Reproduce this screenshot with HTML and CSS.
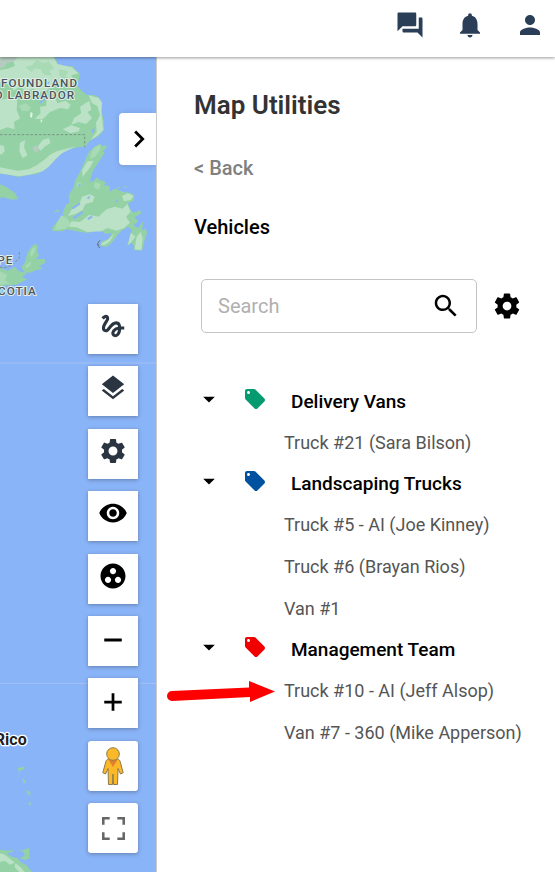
FILE: index.html
```
<!DOCTYPE html>
<html lang="en">
  <head>
    <meta charset="UTF-8" />
    <meta name="viewport" content="width=device-width, initial-scale=1" />
    <title>Map Utilities</title>
    <link rel="stylesheet" href="styles.css">
  </head>
  <body>
    <header class="topbar">
      <button class="icon-btn" type="button" aria-label="Messages">
        <svg class="icon" viewBox="0 0 24 24"><path d="M21 6h-2v9H6v2c0 .55.45 1 1 1h11l4 4V7c0-.55-.45-1-1-1zm-4 6V3c0-.55-.45-1-1-1H3c-.55 0-1 .45-1 1v14l4-4h10c.55 0 1-.45 1-1z"/></svg>
      </button>
      <button class="icon-btn" type="button" aria-label="Notifications">
        <svg class="icon" viewBox="0 0 24 24"><path d="M12 22c1.1 0 2-.9 2-2h-4c0 1.1.89 2 2 2zm6-6v-5c0-3.07-1.64-5.64-4.5-6.32V4c0-.83-.67-1.5-1.5-1.5s-1.5.67-1.5 1.5v.68C7.63 5.36 6 7.92 6 11v5l-2 2v1h16v-1l-2-2z"/></svg>
      </button>
      <button class="icon-btn" type="button" aria-label="Account">
        <svg class="icon" viewBox="0 0 24 24"><path d="M12 12c2.21 0 4-1.79 4-4s-1.79-4-4-4-4 1.79-4 4 1.79 4 4 4zm0 2c-2.67 0-8 1.34-8 4v2h16v-2c0-2.66-5.33-4-8-4z"/></svg>
      </button>
    </header>

    <main class="content">
      <section class="map" aria-label="Map">
        <svg class="map-canvas" viewBox="0 21 468 2445" preserveAspectRatio="xMinYMin slice">
          <!-- Labrador -->
          <path class="land" d="M0 21H165L172 40L195 50L218 48L228 62L240 70L236 90L232 108L246 124L262 136L280 134L296 142L306 156L304 180L311 212L312 240L296 258L270 272L255 290L232 292L205 298L186 308L170 322L150 345L130 362L110 372L80 376L55 381L30 375L0 371Z"/>
          <path class="land-light" d="M35 21H160L172 42L215 52L236 70L214 76L224 96L200 90L186 112L160 104L142 120L118 128L100 116L78 124L60 110L40 122L30 90L0 84V60L22 56L45 48Z"/>
          <path class="land-light" d="M0 150L30 144L52 152L50 180L60 205L42 216L44 238L22 232L0 240Z"/>
          <path class="land-light" d="M140 150L165 143L172 160L196 152L212 164L204 178L180 174L150 186L128 208L104 206L122 190L120 170L138 168Z"/>
          <path class="land-light" d="M240 170L268 152L274 180L262 186L276 204L258 222L236 216L214 224L222 204L244 190Z"/>
          <path class="land-light" d="M188 238L214 226L240 234L236 244L212 250Z"/>
          <path class="land-light" d="M60 278L76 270L72 290L82 316L68 324L58 304Z"/>
          <path class="land-light" d="M128 270L146 264L152 278L134 290L122 302L112 292Z"/>
          <path class="land-light" d="M0 285L12 288L14 304L4 314L0 312Z"/>
          <path class="land-light" d="M0 352L22 356L52 362L86 358L110 346L132 330L150 314L170 304L200 296L228 290L205 300L186 310L168 326L146 350L128 364L84 375L55 379L0 370Z"/>
          <path class="land-light" d="M266 136L296 144L306 158L304 185L310 240L294 256L272 270L290 246L288 218L300 196L292 168L276 160Z"/>
          <path class="land-mid" d="M110 30L132 40L146 34L162 54L148 62L156 76L132 74L122 58L104 56L94 66L76 50L96 46Z"/>
          <path class="land-mid" d="M178 58L206 64L196 78L212 88L190 86L178 76Z"/>
          <path class="land-mid" d="M56 168L78 160L92 172L86 184L66 182Z"/>
          <path class="rock" d="M0 21H54L42 34L20 40L12 52L0 54Z"/>
          <path class="rock" d="M96 294L108 286L118 298L108 310Z"/>
          <path class="water" d="M118 156L134 144L136 148L120 162ZM158 134L170 128L164 140ZM212 96L222 104L216 108ZM280 232L284 240L278 252L275 244ZM140 98L150 94L144 104Z"/>
          <path class="snow" d="M92 186L98 190L96 204L90 200ZM122 208L128 212L122 218Z"/>
          <path class="border-line" d="M0 254H254V292"/>

          <!-- Newfoundland -->
          <path class="land" d="M284 290L300 281L306 288L320 286L318 296L308 302L314 308L296 336L284 354L276 370L270 396L282 392L290 382L300 390L318 396L312 406L330 408L328 426L344 416L356 420L370 426L390 428L403 436L400 452L384 460L392 480L400 488L420 481L424 490L404 502L414 514L400 526L414 534L430 514L426 540L437 536L441 548L434 570L426 602L402 600V586L392 576L380 590L390 560L396 540L384 530L364 542L352 556L340 572L322 590L300 588L306 574L326 566L336 548L318 552L298 540L262 549L238 545L200 538L186 544L158 543L156 534L170 516L190 498L188 488L198 464L208 458L206 436L220 414L226 390L240 366L258 324L268 304Z"/>
          <path class="land-light" d="M262 334L280 332L272 350L256 370L248 380L246 362ZM246 440L270 432L284 440L278 456L256 462L248 480L226 492L204 498L214 480L238 462ZM320 478L344 470L368 476L382 462L392 486L378 500L390 518L372 534L350 542L322 534L304 544L262 546L230 532L206 530L214 514L240 516L268 494L296 500L308 488ZM366 438L384 430L400 438L392 450L372 454ZM344 550L330 574L312 586L302 582L326 568ZM392 548L406 560L392 578L384 586ZM410 560L422 546L428 564L424 600L404 598Z"/>
          <path class="land-mid" d="M284 292L302 284L300 300L284 322L270 326L274 308ZM184 496L200 504L212 522L198 536L164 540L170 520ZM284 396L302 402L296 420L282 412ZM232 396L244 400L240 412L230 412Z"/>
          <path class="water" d="M214 474L238 458L242 462L220 478ZM218 502L246 484L250 488L224 508ZM262 504L278 496L276 504L264 510ZM260 444L272 436L266 448ZM234 404L242 402L238 414ZM346 458L350 446L354 454Z"/>
          <path class="land" d="M162 486L172 478L178 486ZM350 414L356 410L358 416ZM372 410L380 408L378 416Z"/>
          <path class="coast-mark" d="M300 571L293 580L294 586L299 594M292 584H297"/>

          <!-- Gulf and Cape Breton -->
          <path class="land" d="M0 403L20 412L46 430L54 447L36 449L10 442L0 443Z"/>
          <path class="land" d="M107 580L114 590L110 606L118 616L106 628L134 626L136 638L118 648L128 656L110 660L90 668L72 666L64 650L74 638L82 610L94 590Z"/>
          <path class="land-mid" d="M98 594L106 592L104 606L94 622L90 612ZM78 646L94 634L90 648L76 656Z"/>
          <path class="land" d="M0 654L24 662L44 650L56 664L82 668L66 682L82 688L62 698L48 704L30 706L0 708Z"/>
          <path class="land-mid" d="M0 664L22 676L14 690L30 700L0 704Z"/>
          <path class="border-line" d="M0 652H24L42 640L58 624V604"/>

          <!-- Graticule -->
          <path class="graticule" d="M0 939H468M0 1900H468"/>

          <!-- Antilles and South America -->
          <path class="land" d="M54 2154L72 2150L75 2156L64 2160L56 2166ZM68 2186L74 2190L78 2200L70 2198ZM78 2220L90 2226L92 2236L82 2232ZM86 2258L92 2256L93 2264L86 2264Z"/>
          <path class="land" d="M0 2400L30 2402L42 2398L36 2406L20 2410L34 2420L52 2424L64 2438L78 2444L96 2466H0ZM60 2402L88 2394V2426L76 2430L58 2424L74 2418L72 2406Z"/>
          <path class="land-light" d="M0 2410L14 2414L30 2426L44 2438L30 2444L14 2432L0 2436ZM46 2440L62 2452L74 2466H58L44 2452Z"/>

          <g class="region-label">
            <text x="234" y="111">WFOUNDLAND</text>
            <text x="225" y="146">D LABRADOR</text>
            <text x="40" y="642">PE</text>
            <text x="110" y="735">COTIA</text>
          </g>
          <text class="country-label" x="80" y="2086">Rico</text>
        </svg>

        <button class="collapse-tab" type="button" aria-label="Collapse panel">
          <svg class="icon" viewBox="0 0 24 24"><path d="M10 6L8.590 7.410 13.170 12l-4.580 4.590L10 18l6-6z"/></svg>
        </button>

        <div class="map-tools">
          <button class="tool" type="button" aria-label="Draw">
            <svg class="icon" viewBox="0 0 24 24"><path d="M4.590 6.890c.7-.71 1.400-1.350 1.710-1.220.5.200 0 1.030-.3 1.520-.25.420-2.860 3.890-2.860 6.310 0 1.280.48 2.340 1.340 2.980.75.560 1.740.73 2.640.46 1.070-.31 1.950-1.400 3.060-2.770 1.210-1.490 2.830-3.440 4.080-3.440 1.630 0 1.650 1.010 1.760 1.790-3.780.64-5.380 3.670-5.380 5.370 0 1.700 1.440 3.090 3.210 3.090 1.630 0 4.290-1.330 4.690-6.100H21v-2.500h-2.470c-.15-1.650-1.090-4.200-4.030-4.200-2.250 0-4.180 1.910-4.940 2.840-.58.730-2.060 2.480-2.290 2.720-.25.300-.68.840-1.110.84-.45 0-.72-.83-.36-1.920.35-1.090 1.400-2.860 1.850-3.520.78-1.140 1.300-1.920 1.300-3.280C8.950 3.690 7.310 3 6.440 3 5.120 3 3.970 4 3.720 4.250c-.36.360-.66.660-.88.930l1.750 1.710zm9.290 11.660c-.31 0-.74-.26-.74-.72 0-.6.73-2.200 2.870-2.760-.3 2.690-1.430 3.480-2.130 3.480z"/></svg>
          </button>
          <button class="tool" type="button" aria-label="Layers">
            <svg class="icon" viewBox="0 0 24 24"><path d="M11.990 18.540l-7.370-5.730L3 14.070l9 7 9-7-1.630-1.270-7.380 5.740zM12 16l7.360-5.730L21 9l-9-7-9 7 1.630 1.270L12 16z"/></svg>
          </button>
          <button class="tool" type="button" aria-label="Map settings">
            <svg class="icon" viewBox="0 0 24 24"><path d="M19.140 12.940c.04-.3.060-.61.060-.94 0-.32-.02-.64-.07-.94l2.030-1.580c.18-.14.230-.41.120-.61l-1.920-3.320c-.12-.22-.37-.29-.59-.22l-2.390.96c-.5-.38-1.030-.7-1.620-.94l-.36-2.540c-.04-.24-.24-.41-.48-.41h-3.840c-.24 0-.43.170-.47.410l-.36 2.540c-.59.240-1.130.57-1.620.94l-2.390-.96c-.22-.08-.47 0-.59.220L2.740 8.870c-.12.210-.08.470.12.610l2.030 1.580c-.05.300-.09.630-.09.940s.02.640.07.940l-2.030 1.580c-.18.140-.23.410-.12.610l1.920 3.320c.12.220.37.290.59.220l2.390-.96c.5.380 1.030.7 1.620.94l.36 2.540c.05.240.24.410.48.410h3.840c.24 0 .44-.17.470-.41l.36-2.540c.59-.24 1.130-.56 1.620-.94l2.390.96c.22.080.47 0 .59-.22l1.920-3.320c.12-.22.070-.47-.12-.61l-2.010-1.580zM12 15.600c-1.980 0-3.600-1.620-3.600-3.600s1.620-3.600 3.600-3.600 3.600 1.620 3.600 3.600-1.620 3.600-3.600 3.600z"/></svg>
          </button>
          <button class="tool tool-black" type="button" aria-label="Visibility">
            <svg class="icon" viewBox="0 0 24 24"><path d="M12 4.500C7 4.500 2.730 7.610 1 12c1.730 4.390 6 7.500 11 7.500s9.270-3.110 11-7.500c-1.730-4.390-6-7.500-11-7.500zM12 17c-2.760 0-5-2.240-5-5s2.240-5 5-5 5 2.240 5 5-2.240 5-5 5zm0-8c-1.660 0-3 1.340-3 3s1.340 3 3 3 3-1.340 3-3-1.340-3-3-3z"/></svg>
          </button>
          <button class="tool tool-black" type="button" aria-label="Cluster vehicles">
            <svg class="icon" viewBox="0 0 24 24"><path d="M12 2C6.480 2 2 6.480 2 12s4.480 10 10 10 10-4.480 10-10S17.520 2 12 2zM8 17.500c-1.380 0-2.500-1.120-2.500-2.500s1.120-2.500 2.500-2.500 2.500 1.120 2.500 2.500-1.120 2.500-2.500 2.500zM9.500 8c0-1.380 1.120-2.500 2.500-2.500s2.500 1.120 2.500 2.500-1.120 2.500-2.500 2.500S9.500 9.380 9.500 8zm6.500 9.500c-1.380 0-2.500-1.120-2.500-2.500s1.120-2.500 2.500-2.500 2.500 1.120 2.500 2.500-1.120 2.500-2.500 2.500z"/></svg>
          </button>
          <button class="tool tool-zoom" type="button" aria-label="Zoom out">
            <svg class="icon" viewBox="0 0 24 24"><path d="M19 13.200H5v-2.400h14z"/></svg>
          </button>
          <button class="tool tool-zoom" type="button" aria-label="Zoom in">
            <svg class="icon" viewBox="0 0 24 24"><path d="M19 13.100h-5.900V19h-2.200v-5.900H5v-2.200h5.900V5h2.200v5.900H19z"/></svg>
          </button>
          <button class="tool tool-google" type="button" aria-label="Street View">
            <svg class="pegman" viewBox="0 0 22 38">
              <path d="M6.500 12h9c1.500.3 2.300 1.200 2.700 2.700l3 11-2.700 1.300-2.500-5.500-.5 16h-4L11 27l-.5 10.500h-4L6 21.500 3.500 27 .8 25.700l3-11c.4-1.500 1.200-2.400 2.700-2.700z"/>
              <path class="pegman-shade" d="M6.300 12.500h9.400L11 20z"/>
              <circle cx="11" cy="7" r="6.300"/>
            </svg>
          </button>
          <button class="tool tool-google tool-gray" type="button" aria-label="Fullscreen">
            <svg class="fullscreen" viewBox="0 0 18 18"><path d="M0 0v6h2V2h4V0H0zm16 0h-4v2h4v4h2V0h-2zm0 16h-4v2h6v-6h-2v4zM2 12H0v6h6v-2H2v-4z"/></svg>
          </button>
        </div>
      </section>

      <aside class="panel">
        <h1>Map Utilities</h1>
        <a class="back" href="#">&lt; Back</a>
        <h2>Vehicles</h2>

        <form class="search-row" role="search">
          <div class="search-box">
            <input type="text" id="search" placeholder="Search" aria-label="Search" />
            <button class="icon-btn" type="submit" aria-label="Submit search">
              <svg class="icon" viewBox="0 0 24 24"><path d="M15.500 14h-.79l-.28-.27C15.410 12.590 16 11.110 16 9.500 16 5.910 13.090 3 9.500 3S3 5.910 3 9.500 5.910 16 9.500 16c1.610 0 3.090-.59 4.230-1.570l.27.280v.79l5 4.990L20.490 19l-4.990-5zm-6 0C7.010 14 5 11.990 5 9.500S7.010 5 9.500 5 14 7.010 14 9.500 11.990 14 9.500 14z"/></svg>
            </button>
          </div>
          <button class="icon-btn" type="button" aria-label="Search settings">
            <svg class="icon" viewBox="0 0 24 24"><path d="M19.430 12.980c.04-.32.070-.64.070-.98s-.03-.66-.07-.98l2.110-1.650c.19-.15.240-.42.120-.64l-2-3.460c-.12-.22-.39-.3-.61-.22l-2.490 1c-.52-.4-1.080-.73-1.690-.98l-.38-2.650C14.460 2.180 14.250 2 14 2h-4c-.25 0-.46.180-.49.420l-.38 2.650c-.61.250-1.170.59-1.690.98l-2.490-1c-.23-.09-.49 0-.61.220l-2 3.460c-.13.220-.07.490.12.640l2.110 1.650c-.04.320-.07.650-.07.980s.03.660.07.980l-2.110 1.650c-.19.150-.24.420-.12.640l2 3.460c.12.220.39.300.61.220l2.490-1c.52.400 1.080.73 1.690.98l.38 2.650c.03.240.24.420.49.420h4c.25 0 .46-.18.490-.42l.38-2.650c.61-.25 1.170-.59 1.690-.98l2.490 1c.23.090.49 0 .61-.22l2-3.460c.12-.22.070-.49-.12-.64l-2.110-1.650zM12 15.500c-1.930 0-3.500-1.570-3.500-3.500s1.570-3.500 3.500-3.500 3.500 1.570 3.500 3.500-1.570 3.500-3.500 3.500z"/></svg>
          </button>
        </form>

        <div class="groups">
          <details class="group" open>
            <summary>
              <svg class="caret" viewBox="0 0 24 24"><path d="M7 10l5 5 5-5z"/></svg>
              <svg class="tag tag-green" viewBox="0 0 24 24"><path d="M21.410 11.580l-9-9C12.050 2.220 11.550 2 11 2H4c-1.100 0-2 .9-2 2v7c0 .55.220 1.050.59 1.420l9 9c.36.360.86.580 1.410.58.550 0 1.050-.22 1.410-.59l7-7c.37-.36.590-.86.590-1.410 0-.55-.23-1.060-.59-1.420zM5.500 7C4.670 7 4 6.330 4 5.500S4.670 4 5.500 4 7 4.670 7 5.500 6.330 7 5.500 7z"/></svg>
              <span class="group-name">Delivery Vans</span>
            </summary>
            <ul>
              <li><a href="#">Truck #21 (Sara Bilson)</a></li>
            </ul>
          </details>
          <details class="group" open>
            <summary>
              <svg class="caret" viewBox="0 0 24 24"><path d="M7 10l5 5 5-5z"/></svg>
              <svg class="tag tag-blue" viewBox="0 0 24 24"><path d="M21.410 11.580l-9-9C12.050 2.220 11.550 2 11 2H4c-1.100 0-2 .9-2 2v7c0 .55.220 1.050.59 1.420l9 9c.36.360.86.580 1.410.58.550 0 1.050-.22 1.410-.59l7-7c.37-.36.590-.86.590-1.410 0-.55-.23-1.060-.59-1.420zM5.500 7C4.670 7 4 6.330 4 5.500S4.670 4 5.500 4 7 4.670 7 5.500 6.330 7 5.500 7z"/></svg>
              <span class="group-name">Landscaping Trucks</span>
            </summary>
            <ul>
              <li><a href="#">Truck #5 - AI (Joe Kinney)</a></li>
              <li><a href="#">Truck #6 (Brayan Rios)</a></li>
              <li><a href="#">Van #1</a></li>
            </ul>
          </details>
          <details class="group" open>
            <summary>
              <svg class="caret" viewBox="0 0 24 24"><path d="M7 10l5 5 5-5z"/></svg>
              <svg class="tag tag-red" viewBox="0 0 24 24"><path d="M21.410 11.580l-9-9C12.050 2.220 11.550 2 11 2H4c-1.100 0-2 .9-2 2v7c0 .55.220 1.050.59 1.420l9 9c.36.360.86.580 1.410.58.550 0 1.050-.22 1.410-.59l7-7c.37-.36.590-.86.590-1.410 0-.55-.23-1.060-.59-1.420zM5.500 7C4.670 7 4 6.330 4 5.500S4.670 4 5.500 4 7 4.670 7 5.500 6.330 7 5.500 7z"/></svg>
              <span class="group-name">Management Team</span>
            </summary>
            <ul>
              <li class="pointed">
                <svg class="pointer" viewBox="0 0 108 22"><path d="M5 10L82 6.500V0L108 10.500L83 21V16L5 20A5 5 0 0 1 5 10Z"/></svg>
                <a href="#">Truck #10 - AI (Jeff Alsop)</a>
              </li>
              <li><a href="#">Van #7 - 360 (Mike Apperson)</a></li>
            </ul>
          </details>
        </div>
      </aside>
    </main>
  </body>
</html>
```

FILE: styles.css
```
* {
  box-sizing: border-box;
}
body {
  margin: 0;
  min-height: 100vh;
  display: flex;
  flex-direction: column;
  font-family: Roboto, "Liberation Sans", sans-serif;
  font-size: 18px;
  color: #000;
  background: #fff;
}
h1,
h2,
ul {
  margin: 0;
  padding: 0;
}
a {
  text-decoration: none;
}
button {
  padding: 0;
  border: none;
  background: none;
  color: inherit;
  cursor: pointer;
}
svg {
  display: block;
}
.icon {
  width: 30px;
  height: 30px;
  fill: currentColor;
}

/* Top bar */
.topbar {
  display: flex;
  justify-content: flex-end;
  gap: 30px;
  padding: 10px 10px 17px;
  color: #2a3f57;
  box-shadow: 0 1px 3px rgba(0, 0, 0, 0.4);
  z-index: 2;
}

.content {
  flex: 1;
  display: grid;
  grid-template-columns: minmax(156px, 28%) minmax(0, 1fr);
}

/* Map */
.map {
  position: relative;
  overflow: hidden;
  background: #8ab4f8;
}
.map-canvas {
  position: absolute;
  width: 100%;
  height: 100%;
}
.land {
  fill: #94d2a5;
}
.land-mid {
  fill: #a8dab5;
}
.land-light {
  fill: #bbe2c6;
}
.rock {
  fill: #b4cbbf;
}
.snow {
  fill: #e2f3e6;
}
.water {
  fill: #8ab4f8;
}
.border-line {
  fill: none;
  stroke: #7d9488;
  stroke-width: 3;
  stroke-dasharray: 8 5;
}
.coast-mark {
  fill: none;
  stroke: #5f6f7d;
  stroke-width: 3;
}
.graticule {
  stroke: #a3c1f5;
  stroke-width: 3;
}
.region-label {
  font-size: 35px;
  font-weight: 500;
  letter-spacing: 3px;
  text-anchor: end;
  fill: #4a5560;
  stroke: #e0f0e6;
  stroke-width: 6px;
  stroke-linejoin: round;
  paint-order: stroke;
}
.country-label {
  font-size: 48px;
  font-weight: 700;
  text-anchor: end;
  fill: #202124;
  stroke: #fff;
  stroke-width: 8px;
  stroke-linejoin: round;
  paint-order: stroke;
}
.collapse-tab {
  position: absolute;
  top: 56px;
  right: 0;
  width: 37px;
  height: 52px;
  display: flex;
  align-items: center;
  justify-content: center;
  padding-left: 2px;
  background: #fff;
  border-radius: 4px 0 0 4px;
  box-shadow: 0 1px 6px rgba(0, 0, 0, 0.15);
}
.collapse-tab .icon {
  width: 34px;
  height: 34px;
}
.map-tools {
  position: absolute;
  top: 247px;
  right: 18px;
  bottom: 19px;
  display: flex;
  flex-direction: column;
  justify-content: space-between;
}
.tool {
  width: 50px;
  height: 50px;
  display: flex;
  align-items: center;
  justify-content: center;
  padding-bottom: 6px;
  color: #2b3441;
  background: #fff;
  box-shadow: 0 1px 4px rgba(0, 0, 0, 0.3);
}
.tool-black {
  color: #000;
}
.tool-zoom {
  padding-bottom: 2px;
  color: #000;
}
.tool-google {
  padding: 0;
  border-radius: 3px;
}
.tool-gray {
  color: #666;
}
.pegman {
  width: 22px;
  height: 38px;
  fill: #fbb829;
  stroke: #8a7a4c;
  stroke-width: 1;
}
.pegman .pegman-shade {
  fill: #e1802f;
  stroke: none;
}
.fullscreen {
  width: 23px;
  height: 23px;
  fill: currentColor;
}

/* Side panel */
.panel {
  padding: 30px 33px 30px 37px;
  border-left: 1px solid #ccc;
}
h1 {
  font-size: 26px;
  font-weight: 600;
  line-height: 36px;
  color: #333;
}
.back {
  display: block;
  margin-top: 32px;
  font-size: 20px;
  font-weight: 500;
  line-height: 26px;
  color: #808080;
}
h2 {
  margin-top: 33px;
  font-size: 20px;
  font-weight: 500;
  line-height: 26px;
}
.search-row {
  display: flex;
  align-items: center;
  gap: 15px;
  margin-top: 39px;
  padding-left: 7px;
}
.search-box {
  flex: 1;
  min-width: 0;
  display: flex;
  align-items: center;
  height: 54px;
  padding: 0 15px 0 16px;
  border: 1px solid #c4c4c4;
  border-radius: 5px;
}
.search-box input {
  flex: 1;
  min-width: 0;
  padding: 0;
  border: none;
  outline: none;
  background: none;
  font-family: inherit;
  font-size: 20px;
}
.search-box input::placeholder {
  color: #b0b0b0;
}

/* Vehicle groups */
.groups {
  margin-top: 46px;
}
summary {
  display: flex;
  align-items: center;
  height: 40px;
  list-style: none;
  cursor: pointer;
}
.group-name {
  padding-top: 4px;
  font-size: 19px;
  font-weight: 500;
}
.caret {
  width: 28px;
  height: 28px;
  margin-left: 1px;
  margin-right: 20px;
}
.tag {
  width: 24px;
  height: 24px;
  margin-right: 24px;
}
.tag-green {
  fill: #059b70;
}
.tag-blue {
  fill: #00519f;
}
.tag-red {
  fill: #f20000;
}
.group ul {
  list-style: none;
  padding-left: 90px;
}
.group li {
  padding-top: 6px;
  line-height: 36px;
}
.group a {
  font-size: 18px;
  color: #555;
  white-space: nowrap;
}
.pointed {
  position: relative;
}
.pointer {
  position: absolute;
  top: 14px;
  right: 100%;
  width: 108px;
  height: 22px;
  margin-right: 9px;
  fill: #fe0000;
}
```
